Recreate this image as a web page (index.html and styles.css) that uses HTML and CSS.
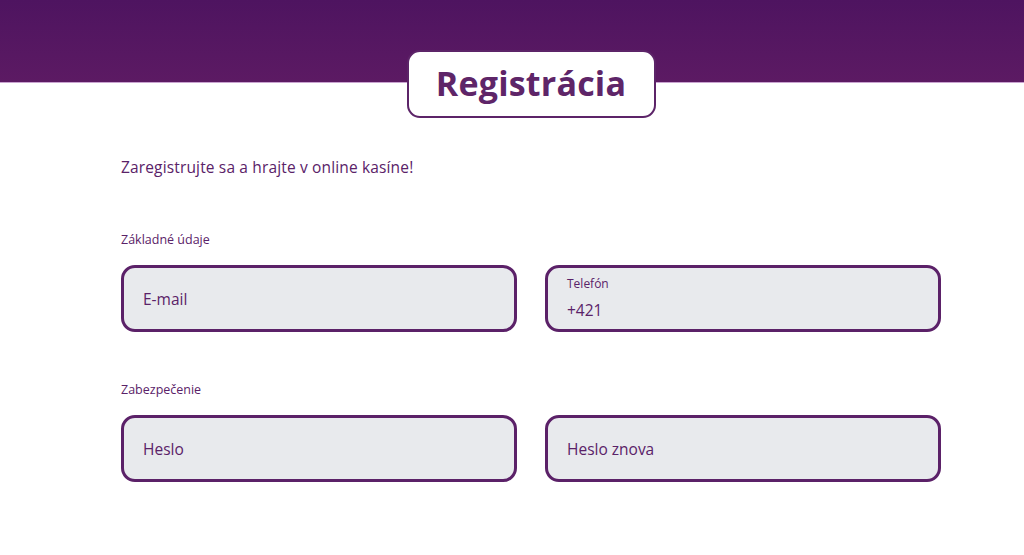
FILE: index.html
```html
<!DOCTYPE html>
<html lang="sk">
<head>
<meta charset="utf-8">
<link rel="stylesheet" href="styles.css">
</head>
<body>
<header class="topbar"></header>
<main class="page">
  <div class="title-wrap">
    <h1 class="title">Registrácia</h1>
  </div>
  <p class="intro">Zaregistrujte sa a hrajte v online kasíne!</p>
  <section class="group">
    <h2 class="group-label">Základné údaje</h2>
    <div class="row">
      <div class="field"><span class="placeholder">E-mail</span></div>
      <div class="field field-labelled">
        <span class="small-label">Telefón</span>
        <span class="value">+421</span>
      </div>
    </div>
  </section>
  <section class="group">
    <h2 class="group-label">Zabezpečenie</h2>
    <div class="row">
      <div class="field"><span class="placeholder">Heslo</span></div>
      <div class="field"><span class="placeholder">Heslo znova</span></div>
    </div>
  </section>
</main>
</body>
</html>
```
FILE: styles.css
```css
* { box-sizing: border-box; }
html, body { margin: 0; padding: 0; background: #fff; }
body {
  font-family: "Open Sans", "Liberation Sans", sans-serif;
  color: #5a2268;
  width: 1024px;
  height: 555px;
  overflow: hidden;
}
.topbar {
  height: 83px;
  background: linear-gradient(#4e1460, #5c1a63);
  border-bottom: 1px solid #c9a3d0;
}
.page {
  width: 820px;
  margin-left: 121px;
}
.title-wrap {
  display: flex;
  justify-content: center;
  margin-top: -33px;
}
.title {
  margin: 0;
  width: 249px;
  height: 68px;
  background: #fff;
  border: 2.5px solid #5c2468;
  border-radius: 13px;
  font-size: 34px;
  font-weight: 700;
  line-height: 62px;
  text-align: center;
  color: #5e2568;
  letter-spacing: 0.2px;
}
.intro {
  margin: 39px 0 0;
  font-size: 15.5px;
  line-height: 20px;
  color: #5a2268;
  letter-spacing: 0.15px;
}
.group { margin-top: 55px; }
.group + .group { margin-top: 50px; }
.group-label {
  margin: 0 0 17px;
  font-size: 12.5px;
  font-weight: 400;
  line-height: 16px;
  color: #5a2268;
}
.row {
  display: grid;
  grid-template-columns: 396px 396px;
  column-gap: 28px;
}
.field {
  height: 67px;
  border: 3px solid #5b2168;
  border-radius: 14px;
  background: #e8eaed;
  padding: 0 19px;
  display: flex;
  flex-direction: column;
  justify-content: center;
}
.placeholder {
  font-size: 15.5px;
  color: #5a2268;
}
.field-labelled { justify-content: flex-start; padding-top: 8px; }
.small-label {
  font-size: 12px;
  line-height: 16px;
  color: #5a2268;
}
.value {
  margin-top: 8px;
  font-size: 15.5px;
  line-height: 20px;
  color: #5a2268;
}
```
